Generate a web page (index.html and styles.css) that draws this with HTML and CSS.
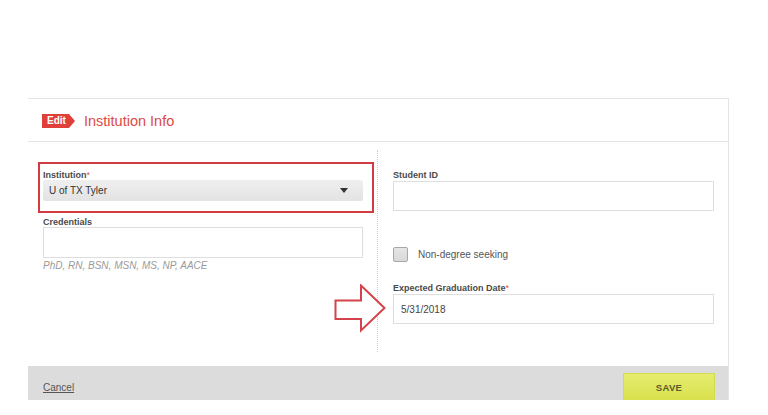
FILE: index.html
```html
<!DOCTYPE html>
<html lang="en">
<head>
<meta charset="utf-8">
<title>Institution Info</title>
<link rel="stylesheet" href="styles.css">
</head>
<body>
<div class="page">
  <section class="card">
    <header class="card-head">
      <span class="badge">Edit</span>
      <h1 class="title">Institution Info</h1>
    </header>
    <div class="card-body">
      <div class="col col-left">
        <div class="field">
          <label class="label">Institution<span class="req">*</span></label>
          <div class="select">
            <span>U of TX Tyler</span>
            <span class="caret"></span>
          </div>
        </div>
        <div class="field cred">
          <label class="label">Credentials</label>
          <div class="input tall"></div>
          <p class="hint">PhD, RN, BSN, MSN, MS, NP, AACE</p>
        </div>
      </div>
      <div class="col col-right">
        <div class="field">
          <label class="label">Student ID</label>
          <div class="input"></div>
        </div>
        <div class="check-row">
          <span class="checkbox"></span>
          <span class="check-label">Non-degree seeking</span>
        </div>
        <div class="field grad">
          <label class="label">Expected Graduation Date<span class="req">*</span></label>
          <div class="input value">5/31/2018</div>
        </div>
      </div>
      <div class="highlight"></div>
      <svg class="arrow" width="54" height="50" viewBox="0 0 54 50">
        <polygon points="1.5,16.5 27,16.5 27,1.5 50.5,24 27,46.5 27,35 1.5,35" fill="#fff" stroke="#d4434a" stroke-width="2" stroke-linejoin="miter"/>
      </svg>
    </div>
    <footer class="card-foot">
      <a class="cancel" href="#">Cancel</a>
      <button class="save" type="button">SAVE</button>
    </footer>
  </section>
</div>
</body>
</html>
```

FILE: styles.css
```css
* { box-sizing: border-box; }
html, body { margin: 0; padding: 0; background: #fff; }
body { font-family: "Liberation Sans", Arial, sans-serif; color: #444; }

.page { padding: 98px 0 0 28px; width: 768px; }

.card {
  width: 701px;
  border-top: 1px solid #e4e4e4;
  border-right: 1px solid #e4e4e4;
  background: #fff;
}

.card-head {
  height: 43px;
  border-bottom: 1px solid #e4e4e4;
  display: flex;
  align-items: center;
  padding-left: 14px;
  padding-top: 1px;
}
.badge {
  position: relative;
  display: inline-block;
  height: 14px;
  line-height: 14px;
  padding: 0 4px 0 5px;
  background: #e0403a;
  color: #fff;
  font-weight: bold;
  font-size: 10px;
  width: 27px;
}
.badge::after {
  content: "";
  position: absolute;
  right: -6px;
  top: 0;
  border-left: 6px solid #e0403a;
  border-top: 7px solid transparent;
  border-bottom: 7px solid transparent;
}
.title {
  margin: 0 0 0 15px;
  font-size: 14.5px;
  font-weight: normal;
  color: #de4a40;
  line-height: 18px;
}

.card-body {
  position: relative;
  display: grid;
  grid-template-columns: 350px 350px;
  padding: 8px 0 14px;
}
.col { height: 202px; padding-top: 20px; }
.col-left { border-right: 1px dotted #cfcfcf; padding-left: 15px; }
.col-right { padding-left: 15px; }

.field { width: 320px; }
.col-right .field { width: 321px; }
.label {
  display: block;
  font-size: 9px;
  font-weight: bold;
  line-height: 10px;
  color: #4a4a4a;
}
.req { color: #d9534f; font-weight: normal; }

.select {
  height: 21px;
  margin-top: 0;
  background: linear-gradient(#efefef, #e3e3e3);
  border-radius: 2px;
  display: flex;
  align-items: center;
  justify-content: space-between;
  padding: 0 15px 0 6px;
  font-size: 10px;
  color: #333;
}
.caret {
  width: 0; height: 0;
  border-left: 4px solid transparent;
  border-right: 4px solid transparent;
  border-top: 5px solid #333;
}

.cred { margin-top: 16px; }
.input {
  height: 30px;
  margin-top: 1px;
  border: 1px solid #dedede;
  background: #fff;
}
.input.tall { height: 31px; margin-top: 0; }
.hint {
  margin: 2px 0 0;
  font-size: 10px;
  line-height: 12px;
  font-style: italic;
  color: #9a9a9a;
}

.check-row {
  display: flex;
  align-items: center;
  margin-top: 36px;
  height: 15px;
}
.checkbox {
  width: 15px; height: 15px;
  border: 1px solid #a8a8a8;
  border-radius: 2px;
  background: linear-gradient(#e6e6e6, #d8d8d8);
}
.check-label { margin-left: 10px; font-size: 10px; color: #555; }

.grad { margin-top: 21px; }
.input.value {
  height: 30px;
  display: flex;
  align-items: center;
  padding-left: 7px;
  font-size: 10px;
  color: #444;
}

.highlight {
  position: absolute;
  left: 10px;
  top: 20px;
  width: 336px;
  height: 51px;
  border: 2px solid #d13b42;
}
.arrow { position: absolute; left: 306px; top: 142px; }

.card-foot {
  height: 34px;
  background: #dcdcdc;
  display: flex;
  justify-content: space-between;
  align-items: flex-start;
  padding: 0 13px 0 15px;
}
.cancel {
  margin-top: 16px;
  font-size: 10px;
  line-height: 12px;
  color: #555;
  text-decoration: underline;
}
.save {
  margin-top: 7px;
  width: 92px;
  height: 28px;
  border: 1px solid #d2dc4c;
  background: linear-gradient(#e6ec70, #d8e14c);
  color: #5b5b2a;
  font-family: "Liberation Sans", Arial, sans-serif;
  font-weight: bold;
  font-size: 9.5px;
  letter-spacing: 0.3px;
  padding: 0;
  position: relative;
}
```
